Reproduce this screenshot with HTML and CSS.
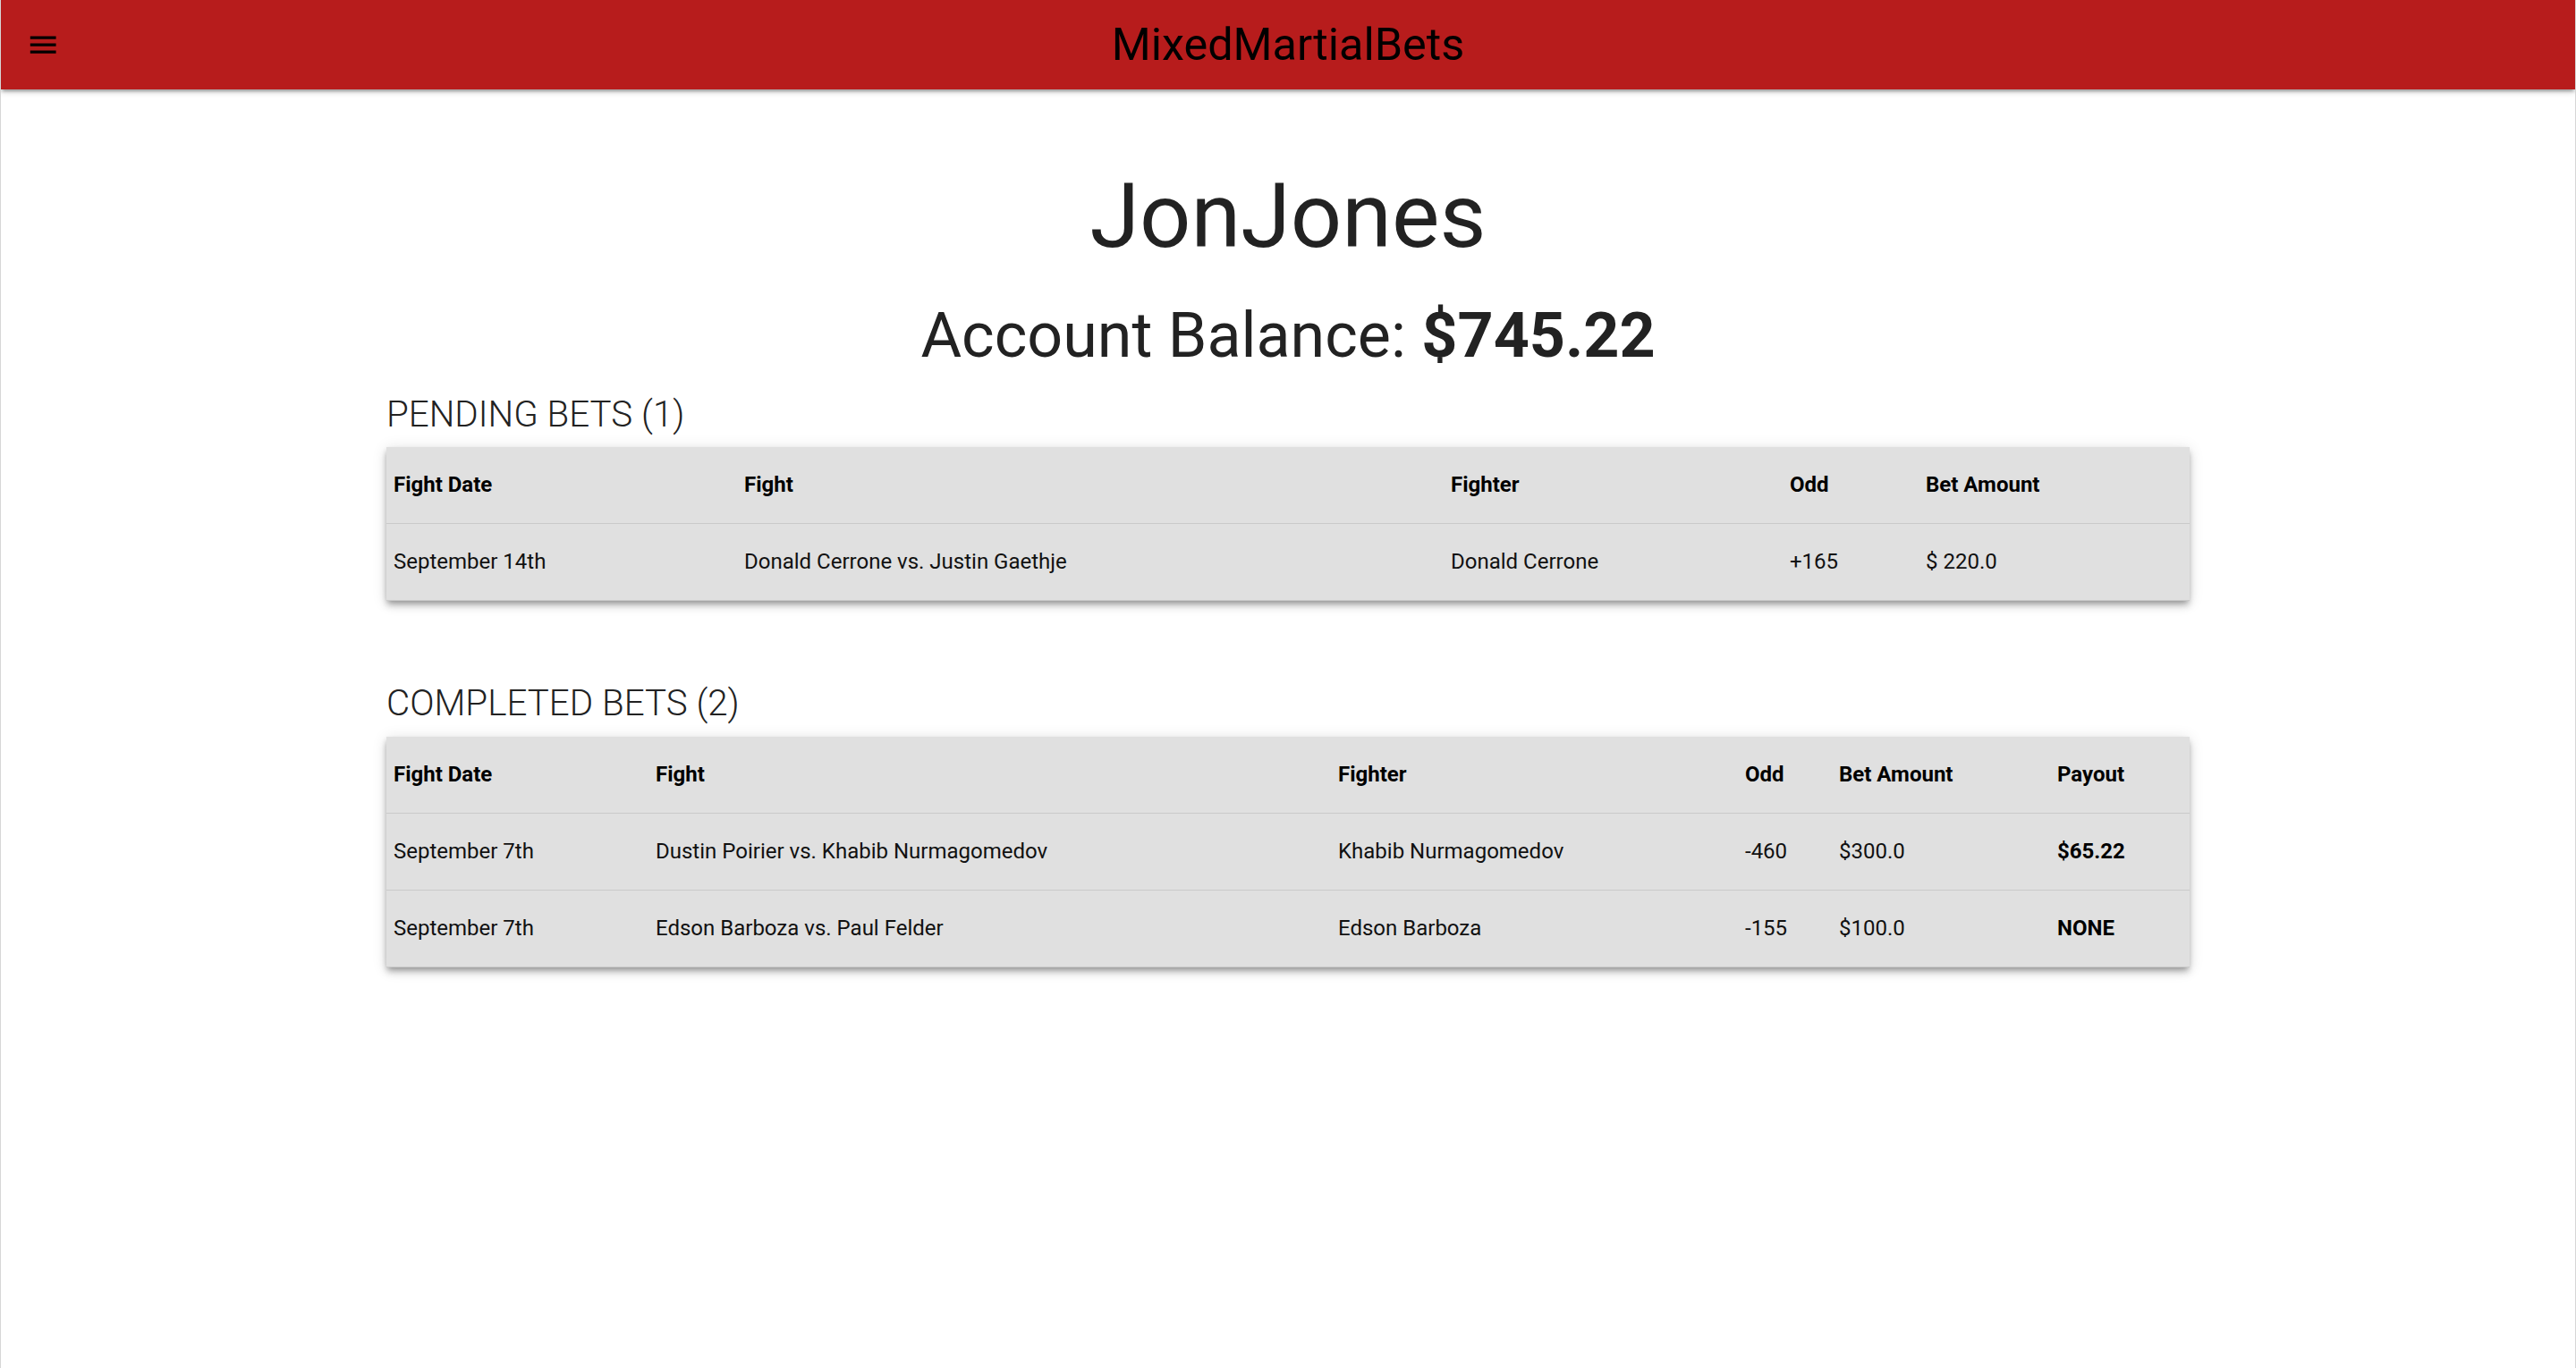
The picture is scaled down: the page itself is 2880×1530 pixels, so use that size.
FILE: index.html
```html
<!DOCTYPE html>
<html lang="en">
<head>
<meta charset="utf-8">
<title>MixedMartialBets</title>
<link rel="stylesheet" href="styles.css">
</head>
<body>
<nav class="navbar">
  <div class="nav-left">
    <svg class="menu-icon" viewBox="0 0 24 24" aria-hidden="true"><path d="M3 18h18v-2H3v2zm0-5h18v-2H3v2zm0-7v2h18V6H3z"/></svg>
  </div>
  <div class="brand">MixedMartialBets</div>
  <div class="nav-right"></div>
</nav>
<main class="container">
  <h1 class="username">JonJones</h1>
  <h3 class="balance">Account Balance: <b>$745.22</b></h3>

  <h5 class="section-title">PENDING BETS (1)</h5>
  <table class="bets pending">
    <colgroup>
      <col class="p-date"><col class="p-fight"><col class="p-fighter"><col class="p-odd"><col class="p-amount">
    </colgroup>
    <thead>
      <tr><th>Fight Date</th><th>Fight</th><th>Fighter</th><th>Odd</th><th>Bet Amount</th></tr>
    </thead>
    <tbody>
      <tr><td>September 14th</td><td>Donald Cerrone vs. Justin Gaethje</td><td>Donald Cerrone</td><td>+165</td><td>$ 220.0</td></tr>
    </tbody>
  </table>

  <h5 class="section-title completed-title">COMPLETED BETS (2)</h5>
  <table class="bets completed">
    <colgroup>
      <col class="c-date"><col class="c-fight"><col class="c-fighter"><col class="c-odd"><col class="c-amount"><col class="c-payout">
    </colgroup>
    <thead>
      <tr><th>Fight Date</th><th>Fight</th><th>Fighter</th><th>Odd</th><th>Bet Amount</th><th>Payout</th></tr>
    </thead>
    <tbody>
      <tr><td>September 7th</td><td>Dustin Poirier vs. Khabib Nurmagomedov</td><td>Khabib Nurmagomedov</td><td>-460</td><td>$300.0</td><td class="payout">$65.22</td></tr>
      <tr><td>September 7th</td><td>Edson Barboza vs. Paul Felder</td><td>Edson Barboza</td><td>-155</td><td>$100.0</td><td class="payout">NONE</td></tr>
    </tbody>
  </table>
</main>
</body>
</html>
```
FILE: styles.css
```css
html, body {
  margin: 0;
  padding: 0;
  background: #ffffff;
}

body {
  font-family: Roboto, "Noto Sans", "Liberation Sans", sans-serif;
  font-size: 24px;
  line-height: 1.5;
  color: rgba(0, 0, 0, 0.87);
  min-height: 1530px;
  box-sizing: border-box;
  border-left: 1px solid #d6d6d6;
  border-right: 1px solid #d6d6d6;
}

.navbar {
  height: 100px;
  background: #b71c1c;
  display: grid;
  grid-template-columns: 1fr auto 1fr;
  align-items: center;
  box-shadow: 0 3px 3px 0 rgba(0,0,0,0.14), 0 5px 2px -3px rgba(0,0,0,0.12), 0 2px 8px 0 rgba(0,0,0,0.2);
  position: relative;
  z-index: 2;
}

.nav-left {
  display: flex;
  align-items: center;
  padding-left: 28px;
}

.menu-icon {
  width: 38.4px;
  height: 38.4px;
  fill: #000000;
  display: block;
}

.brand {
  font-size: 50.4px;
  line-height: 98px;
  color: #000000;
  font-weight: 400;
}

.container {
  width: 2016px;
  margin: 0 auto;
}

.username {
  margin: 87px 0 0;
  font-size: 100.8px;
  line-height: 110.9px;
  font-weight: 400;
  text-align: center;
  color: #222222;
}

.balance {
  margin: 38.7px 0 0;
  font-size: 70px;
  line-height: 77px;
  font-weight: 400;
  text-align: center;
  color: #222222;
}

.balance b {
  font-weight: 700;
}

.section-title {
  margin: 28px 0 15px;
  font-size: 40.3px;
  line-height: 43.3px;
  font-weight: 300;
  color: #222222;
}

.completed-title {
  margin-top: 93.5px;
}

.bets {
  width: 100%;
  table-layout: fixed;
  border-collapse: collapse;
  background: #e0e0e0;
  box-shadow: 0 6.4px 8px 0 rgba(0,0,0,0.14), 0 1.6px 16px 0 rgba(0,0,0,0.12), 0 3.2px 6.4px -1.6px rgba(0,0,0,0.3);
}

.bets tr {
  border-bottom: 1px solid #cacaca;
}

.bets th,
.bets td {
  padding: 24.5px 8px;
  text-align: left;
  vertical-align: middle;
  font-size: 24px;
  line-height: 36px;
  color: #111111;
  white-space: nowrap;
}

.bets th {
  font-weight: 700;
  color: #000000;
}

.bets .payout {
  font-weight: 700;
  color: #000000;
}

.p-date { width: 392px; }
.p-fight { width: 790px; }
.p-fighter { width: 379px; }
.p-odd { width: 152px; }
.p-amount { width: 303px; }

.c-date { width: 293px; }
.c-fight { width: 763px; }
.c-fighter { width: 455px; }
.c-odd { width: 105px; }
.c-amount { width: 244px; }
.c-payout { width: 156px; }
```
